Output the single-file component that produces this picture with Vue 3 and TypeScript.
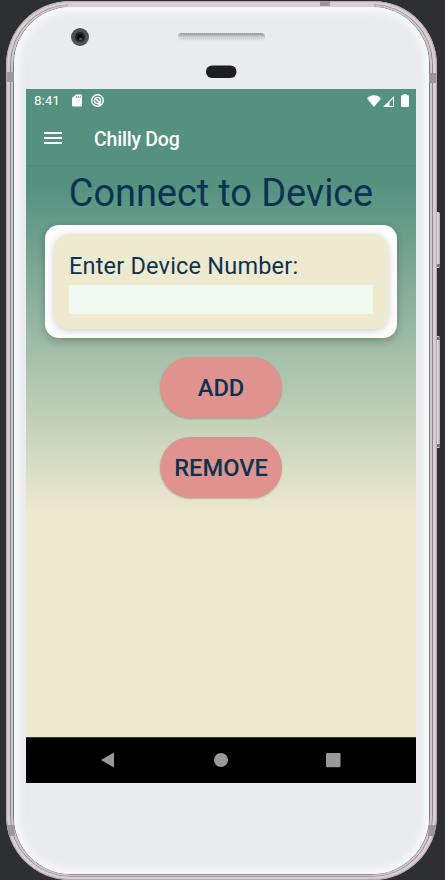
<script setup lang="ts">
import { ref } from 'vue'

const title = 'Chilly Dog'
const deviceNumber = ref('')
const actions: string[] = ['ADD', 'REMOVE']
</script>

<template>
  <div class="stage">
    <svg class="shell" viewBox="0 0 445 880" aria-hidden="true">
      <defs>
        <linearGradient id="key" x1="0" x2="1" y1="0" y2="0">
          <stop offset="0" stop-color="#8f9191" />
          <stop offset=".45" stop-color="#e3e4e4" />
          <stop offset="1" stop-color="#a9abab" />
        </linearGradient>
        <filter id="soft" x="-5%" y="-5%" width="110%" height="110%">
          <feGaussianBlur stdDeviation="3" />
        </filter>
        <clipPath id="face"><rect x="14" y="7" width="415" height="867" rx="57" /></clipPath>
        <linearGradient id="grille" x1="0" x2="0" y1="0" y2="1">
          <stop offset="0" stop-color="#9599a0" />
          <stop offset=".3" stop-color="#b9bcc1" />
          <stop offset=".5" stop-color="#d6d8da" />
          <stop offset="1" stop-color="#eceeee" />
        </linearGradient>
      </defs>
      <rect x="435" y="212" width="5" height="56" rx="1.500" fill="url(#key)" />
      <rect x="435" y="336" width="5" height="112" rx="1.500" fill="url(#key)" />
      <rect x="436" y="264" width="4" height="3" fill="#77797a" />
      <rect x="436" y="337" width="4" height="3" fill="#77797a" />
      <rect x="436" y="444" width="4" height="3" fill="#77797a" />
      <rect x="6" y="1" width="431" height="879" rx="64" fill="#cfc7ca" />
      <rect x="6.500" y="1.500" width="430" height="878" rx="63.500" fill="none" stroke="#b3abae" />
      <rect x="8.500" y="3.200" width="426" height="874.600" rx="62" fill="none" stroke="#d9d0d3" stroke-width="2" />
      <rect x="10.500" y="4.800" width="422" height="871.400" rx="60" fill="none" stroke="#8f888b" />
      <rect x="12" y="5.800" width="419" height="869.400" rx="59" fill="none" stroke="#cfc8cb" stroke-width="1.500" />
      <rect x="13.500" y="6.800" width="416" height="867.400" rx="57.500" fill="none" stroke="#77787a" />
      <path d="M68 5H374" stroke="#d8cfd2" stroke-width="4" />
      <rect x="14" y="7" width="415" height="867" rx="57" fill="#e9ebed" />
      <rect x="14" y="7" width="415" height="867" rx="57" fill="none" stroke="#f7f8fa" stroke-width="11" filter="url(#soft)" clip-path="url(#face)" />
      <g fill="#9e979a">
        <rect x="320" y="1" width="10" height="5" />
        <rect x="7" y="72" width="7" height="10" />
        <rect x="429" y="73" width="7" height="10" />
        <path d="M7 825h7l1 11H9zM429 825h7l-2 11h-6z" />
      </g>
      <circle cx="80" cy="37" r="9" fill="#4c4e53" />
      <circle cx="80" cy="37" r="7.300" fill="none" stroke="#64666c" stroke-dasharray="1 2" />
      <circle cx="80" cy="37" r="5" fill="#202226" />
      <circle cx="80" cy="37" r="2.800" fill="#090b0e" />
      <circle cx="80.500" cy="39" r="1.300" fill="#6b602c" />
      <rect x="178" y="33" width="87" height="9" rx="4" fill="url(#grille)" />
      <path d="M181 38.500h81" stroke="#bec1c4" stroke-width="2" stroke-dasharray="1 1" opacity=".55" />
      <rect x="206" y="65.500" width="30.500" height="12.500" rx="6" fill="#1c1e21" />
    </svg>

    <main class="screen">
      <header class="top">
        <div class="status">
          <span class="clock">8:41</span>
          <svg class="sd" viewBox="0 0 10 13">
            <path fill="#fff" d="M4 .5h5a1 1 0 0 1 1 1V11.500a1 1 0 0 1-1 1H1a1 1 0 0 1-1-1V4z" />
            <path stroke="#54917f" stroke-width=".8" d="M4.500 2v2M6.500 2v2M8.300 2v2" />
          </svg>
          <svg class="blocked" viewBox="0 0 13 13" fill="none" stroke="#fff">
            <circle cx="6.500" cy="6.500" r="5.800" stroke-width="1.400" />
            <circle cx="6.500" cy="6.500" r="3.100" stroke-width="1.400" />
            <path d="M4 4.200l5.200 5" stroke-width="1.600" />
            <path d="M7 10.300h3.500" stroke-width="1.300" />
          </svg>
          <span class="spacer"></span>
          <svg class="wifi" viewBox="0 0 14 12"><path fill="#fff" d="M7 12L0 3.500Q3 .2 7 .2T14 3.500z" /></svg>
          <svg class="signal" viewBox="0 0 11 11">
            <path fill="#fff" fill-rule="evenodd" d="M11 0V11H0zM10 2.600V10H6.600V6z" />
          </svg>
          <svg class="battery" viewBox="0 0 8 13"><path fill="#fff" d="M2.300 0h3.400v1.300H7a1 1 0 0 1 1 1V12a1 1 0 0 1-1 1H1a1 1 0 0 1-1-1V2.300a1 1 0 0 1 1-1h1.300z" /></svg>
        </div>
        <div class="toolbar">
          <svg class="menu" viewBox="0 0 18 12"><path fill="#fff" d="M0 0h18v2H0zM0 5h18v2H0zM0 10h18v2H0z" /></svg>
          <span class="name">{{ title }}</span>
        </div>
      </header>

      <section class="content">
        <h1>Connect to Device</h1>
        <div class="card">
          <div class="panel">
            <label for="device">Enter Device Number:</label>
            <input id="device" v-model="deviceNumber" type="text" />
          </div>
        </div>
        <button v-for="action in actions" :key="action" type="button">{{ action }}</button>
      </section>

      <nav class="navbar">
        <svg viewBox="0 0 16 16"><path fill="#999" d="M1 8L14 .5v15z" /></svg>
        <svg viewBox="0 0 16 16"><circle cx="8" cy="8" r="7" fill="#999" /></svg>
        <svg viewBox="0 0 16 16"><rect x="1" y="1" width="14.500" height="14.300" rx="1.200" fill="#999" /></svg>
      </nav>
    </main>
  </div>
</template>

<style>
body {
  background: #2d2f31;
  overflow: hidden;
}
</style>

<style scoped>
.stage {
  position: relative;
  width: 445px;
  height: 880px;
  box-sizing: border-box;
  padding: 89px 29px 97px 26px;
  font-family: Roboto, sans-serif;
  background: #2d2f31;
}
.shell {
  position: absolute;
  inset: 0;
  width: 445px;
  height: 880px;
}
.screen {
  position: relative;
  display: flex;
  flex-direction: column;
  width: 390px;
  height: 694px;
  color: #0b3250;
}
.top {
  height: 76px;
  background: #54917f;
  box-shadow: 0 1px 2px rgba(20, 60, 50, 0.14);
  color: #fff;
  z-index: 1;
  clip-path: inset(0 0 -4px 0);
}
.status {
  display: flex;
  align-items: center;
  height: 23px;
  padding: 0 7px 0 8px;
}
.clock {
  width: 38px;
  font-size: 13.500px;
  line-height: 23px;
  letter-spacing: -0.1px;
}
.sd { width: 10px; height: 13px; }
.blocked { width: 13px; height: 13px; margin-left: 9px; }
.spacer { flex: 1; }
.wifi { width: 14px; height: 12px; }
.signal { width: 11px; height: 11px; margin: 1px 7px 0 2px; }
.battery { width: 8px; height: 13px; }
.toolbar {
  display: flex;
  align-items: center;
  height: 53px;
  padding-left: 18px;
}
.menu { width: 18px; height: 12px; margin-bottom: 1px; }
.name {
  margin: 1px 0 0 32px;
  font-size: 19.500px;
  font-weight: 500;
  letter-spacing: -0.22px;
}
.content {
  flex: 1;
  display: flex;
  flex-direction: column;
  align-items: center;
  background: linear-gradient(#54917f 18px, #eeead0 350px);
}
h1 {
  margin: 5px 0 9px;
  font-size: 38px;
  font-weight: 400;
  line-height: 46px;
  letter-spacing: -0.1px;
  white-space: nowrap;
}
.card {
  box-sizing: border-box;
  width: 352px;
  height: 113px;
  margin: 0 0 19px;
  padding: 9px;
  border-radius: 14px;
  background: #fff;
  box-shadow: 0 3px 8px rgba(0, 0, 0, 0.25);
}
.panel {
  box-sizing: border-box;
  height: 95px;
  padding: 17px 15px 15px;
  border-radius: 15px;
  background: #eeead0;
  box-shadow: 0 2px 8px rgba(0, 0, 0, 0.2);
}
label {
  display: block;
  height: 34px;
  font-size: 23.500px;
  line-height: 30px;
  letter-spacing: 0.2px;
  white-space: nowrap;
}
input {
  display: block;
  box-sizing: border-box;
  width: 304px;
  height: 29px;
  padding: 0 6px;
  border: 0;
  border-radius: 0;
  outline: 0;
  background: #f0faf1;
  color: inherit;
  font: 18px Roboto, sans-serif;
}
button {
  width: 122px;
  height: 61px;
  margin: 0 0 19px;
  padding: 1px 0 0;
  border: 0;
  border-radius: 31px;
  background: #e0928e;
  box-shadow: 0 1px 2px rgba(0, 0, 0, 0.22);
  color: inherit;
  font: 500 23.700px Roboto, sans-serif;
}
.navbar {
  display: flex;
  justify-content: space-between;
  align-items: center;
  box-sizing: border-box;
  height: 46px;
  padding: 0 75px 1px 74px;
  border-top: 1px solid #403f35;
  background: #000;
}
.navbar svg { width: 16px; height: 16px; }
</style>
